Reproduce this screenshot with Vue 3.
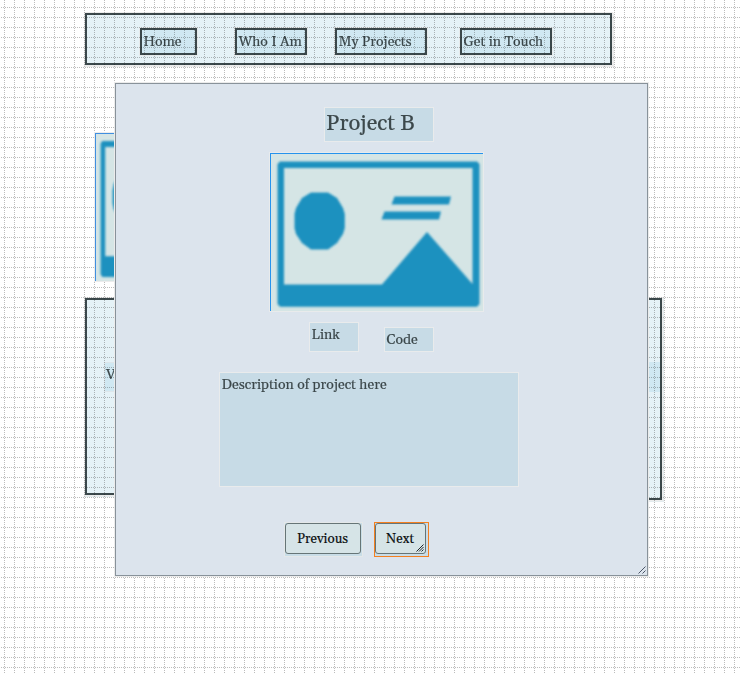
<script setup>
const links = [
  { label: 'Home', kind: 'home' },
  { label: 'Who I Am', kind: 'who' },
  { label: 'My Projects', kind: 'projects' },
  { label: 'Get in Touch', kind: 'touch' },
]
</script>

<template>
  <div class="canvas">
    <svg class="grid" width="741" height="674" shape-rendering="crispEdges">
      <defs>
        <pattern id="dots" width="10" height="10" patternUnits="userSpaceOnUse">
          <path
            fill="#bcbcbc"
            d="M1 7h1v1h-1zM3 7h1v1h-1zM5 7h1v1h-1zM7 7h1v1h-1zM9 7h1v1h-1zM4 0h1v1h-1zM4 2h1v1h-1zM4 4h1v1h-1zM4 6h1v1h-1zM4 8h1v1h-1z"
          />
        </pattern>
      </defs>
      <rect width="741" height="674" fill="url(#dots)" />
    </svg>

    <nav class="nav">
      <a v-for="l in links" :key="l.kind" class="nav-link" :class="l.kind">{{ l.label }}</a>
    </nav>

    <main class="page">
      <div class="thumb">
        <svg width="150" height="147" viewBox="0 0 212 157" preserveAspectRatio="none">
          <use href="#placeholder" />
        </svg>
      </div>
      <div class="panels">
        <section class="panel left"><p class="band">View</p></section>
        <section class="panel right"><p class="band"></p></section>
      </div>
    </main>

    <section class="modal">
      <h1 class="title">Project B</h1>
      <div class="picture">
        <svg width="212" height="157" viewBox="0 0 212 157">
          <defs>
            <filter id="soft" x="-5%" y="-5%" width="110%" height="110%">
              <feGaussianBlur stdDeviation="1.2" />
            </filter>
            <g id="placeholder" fill="#1e91bf" filter="url(#soft)">
              <path fill-rule="evenodd" d="M9 7.5H206L208.5 10V150L206 152.700H9L6.500 150V10ZM13 14V130.500H111L156 78L201.500 130V14Z" />
              <path d="M40 38.500H57L66 44L72 54L73.800 60V74L72 80L66 89L57 95.500H40L31 89L25 80L23.500 74V60L25 54L31 44Z" />
              <path d="M123.500 42.500H180L178 50.500H120.500Z" />
              <path d="M113.500 57.500H170L168 65.500H110.500Z" />
            </g>
          </defs>
          <use href="#placeholder" />
        </svg>
      </div>
      <div class="refs">
        <a class="box link">Link</a>
        <a class="box code">Code</a>
      </div>
      <p class="box description">Description of project here</p>
      <div class="actions">
        <div class="slot"><button class="previous">Previous</button></div>
        <div class="slot selected">
          <button class="next">Next</button>
          <svg class="grip" width="8" height="8" viewBox="0 0 8 8">
            <path d="M0.500 7.500L7.500 .5M3 7.500L7.500 3M5.500 7.500L7.500 5.500" />
          </svg>
        </div>
      </div>
      <svg class="grip modal-grip" width="8" height="8" viewBox="0 0 8 8">
        <path d="M0.500 7.500L7.500 .5M4.500 7.500L7.500 4.500" />
      </svg>
    </section>
  </div>
</template>

<style>
body {
  margin: 0;
  background: #fff;
}
</style>

<style scoped>
* {
  box-sizing: border-box;
}
.canvas {
  position: relative;
  isolation: isolate;
  width: 741px;
  height: 674px;
  overflow: hidden;
  padding: 13px 0 0 85px;
  font-family: Georgia, Gelasio, "Liberation Serif", serif;
  font-size: 14px;
  line-height: 17px;
  color: #3c484b;
  -webkit-text-stroke: 0.15px currentColor;
  background-color: #fff;
}
.grid {
  position: absolute;
  top: 0;
  left: 0;
  z-index: -1;
}
.nav {
  display: flex;
  width: 527px;
  height: 52px;
  padding: 13px 0 0 53px;
  border: 2px solid #3b484b;
  background: #e5f2f7;
  box-shadow: 0 0 0 1px #ececec, 1px 1px 0 1px #ececec;
  mix-blend-mode: multiply;
}
.nav-link {
  height: 27px;
  padding: 4px 0 0 1.5px;
  border: 2px solid #3b484b;
  background: #d0e8f2;
  box-shadow: 0 0 0 1px #e6eaeb;
  white-space: nowrap;
}
.home {
  width: 57px;
}
.who {
  width: 72px;
  margin-left: 38px;
}
.projects {
  width: 92px;
  margin-left: 28px;
}
.touch {
  width: 92px;
  margin-left: 33px;
}
.page {
  padding-top: 68px;
}
.thumb {
  width: 151px;
  height: 148px;
  margin-left: 10px;
  overflow: hidden;
  border: solid #3f8fe0;
  border-width: 1px 0 0 1px;
  background: #d5e5e5;
  box-shadow: 0 0 0 1px #ececec;
}
.thumb svg,
.picture svg {
  display: block;
}
.panels {
  display: flex;
  align-items: flex-start;
  width: 577px;
  margin-top: 17px;
  mix-blend-mode: multiply;
}
.panel {
  border: 2px solid #3b484b;
  background: #e5f2f7;
  box-shadow: 0 0 0 1px #ececec, 1px 1px 0 1px #e4ecee;
}
.panel.left {
  width: 280px;
  height: 197px;
  padding: 62px 0 0 17px;
}
.panel.right {
  flex: 1;
  height: 202px;
  padding-top: 62px;
}
.band {
  height: 30px;
  margin: 0;
  padding: 4px 0 0 1px;
  border: 1px solid #dde6ea;
  background: #d0e8f2;
}
.right .band {
  border: 0;
}
.modal {
  position: absolute;
  top: 83px;
  left: 115px;
  width: 533px;
  height: 493px;
  border: 1px solid #88929a;
  background: #dce4ed;
  box-shadow: 0 0 0 1px #ebebeb;
}
.title {
  width: 110px;
  height: 35px;
  margin: 23px 0 0 208px;
  padding: 3px 0 0 1px;
  border: 1px solid #e9ebec;
  background: #c7dbe6;
  font-size: 22px;
  line-height: 27px;
  font-weight: 400;
  white-space: nowrap;
}
.picture {
  width: 213px;
  height: 158px;
  margin: 11px 0 0 154px;
  border: solid #2693ed;
  border-width: 1px 0 0 1px;
  background: #d5e5e5;
  box-shadow: 0 0 0 1px #e9ebec;
}
.refs {
  display: flex;
  align-items: flex-end;
  gap: 25px;
  margin: 11px 0 0 193px;
}
.box {
  border: 1px solid #e9ebec;
  background: #c7dbe6;
  padding: 4px 0 0 1.5px;
}
.link {
  width: 50px;
  height: 30px;
}
.code {
  width: 50px;
  height: 25px;
}
.description {
  width: 300px;
  height: 115px;
  margin: 20px 0 0 103px;
}
.actions {
  display: flex;
  gap: 11px;
  margin: 35px 0 0 168px;
}
.slot {
  position: relative;
  width: 79px;
  height: 35px;
  border: 1px solid #e4e8e9;
  background: #c9dde7;
}
.slot.selected {
  width: 55px;
  border-color: #f5801f;
}
button {
  display: block;
  height: 31px;
  padding: 1px 1px 0 0;
  border: 1px solid #667577;
  border-radius: 3px;
  background: #d6e4e7;
  font: inherit;
  font-size: 13.333px;
  color: #0b1012;
}
.previous {
  width: 76px;
}
.next {
  width: 51px;
}
.grip {
  position: absolute;
  right: 4px;
  bottom: 4px;
  fill: none;
  stroke: #20282c;
  stroke-width: 1;
}
.modal-grip {
  right: 1px;
  bottom: 1px;
  stroke: #4b5668;
}
</style>
